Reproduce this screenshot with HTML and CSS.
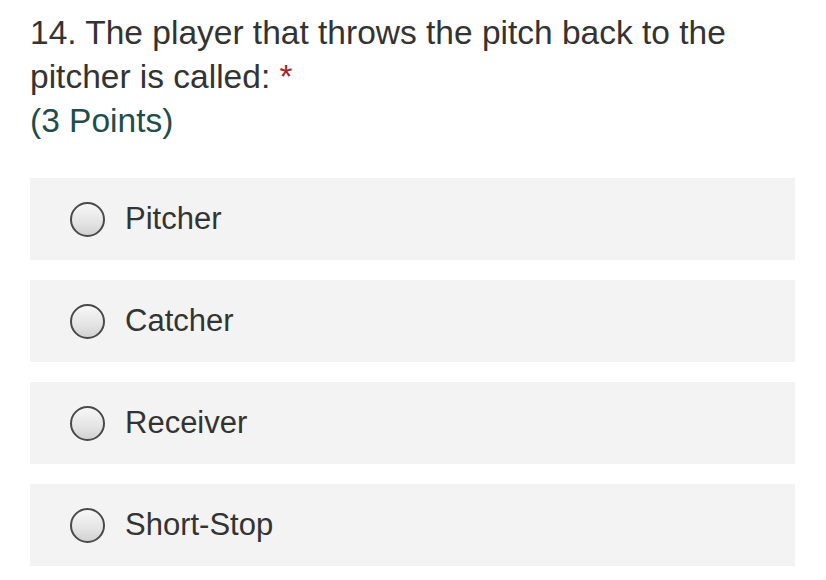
FILE: index.html
```html
<!DOCTYPE html>
<html>
<head>
<meta charset="utf-8">
<link rel="stylesheet" href="styles.css">
</head>
<body>
<div class="question">
  <div class="title">
    <div class="stem">14. The player that throws the pitch back to the<br>pitcher is called: <span class="req">*</span></div>
    <div class="points">(3 Points)</div>
  </div>
  <div class="options">
    <label class="option"><span class="radio"></span><span class="label">Pitcher</span></label>
    <label class="option"><span class="radio"></span><span class="label">Catcher</span></label>
    <label class="option"><span class="radio"></span><span class="label">Receiver</span></label>
    <label class="option"><span class="radio"></span><span class="label">Short-Stop</span></label>
  </div>
</div>
</body>
</html>
```

FILE: styles.css
```css
html, body {
  margin: 0;
  padding: 0;
  background: #ffffff;
}
body {
  font-family: "Liberation Sans", Arial, sans-serif;
  color: #333333;
}
.question {
  padding: 11px 31px 0 30px;
}
.title {
  font-size: 33.5px;
  line-height: 44px;
}
.req {
  color: #a4262c;
}
.points {
  color: #1f4d4b;
}
.options {
  margin-top: 35px;
  display: flex;
  flex-direction: column;
  gap: 20px;
}
.option {
  display: flex;
  align-items: center;
  height: 82px;
  background: #f3f3f3;
  padding-left: 40px;
  box-sizing: border-box;
}
.radio {
  width: 35px;
  height: 35px;
  box-sizing: border-box;
  border: 2px solid #4a4a4a;
  border-radius: 50%;
  background: linear-gradient(180deg, #f7f7f7 0%, #e4e4e4 60%, #d2d2d2 100%);
  flex: none;
}
.label {
  margin-left: 20px;
  font-size: 31px;
  line-height: 36px;
  color: #333333;
}
```
